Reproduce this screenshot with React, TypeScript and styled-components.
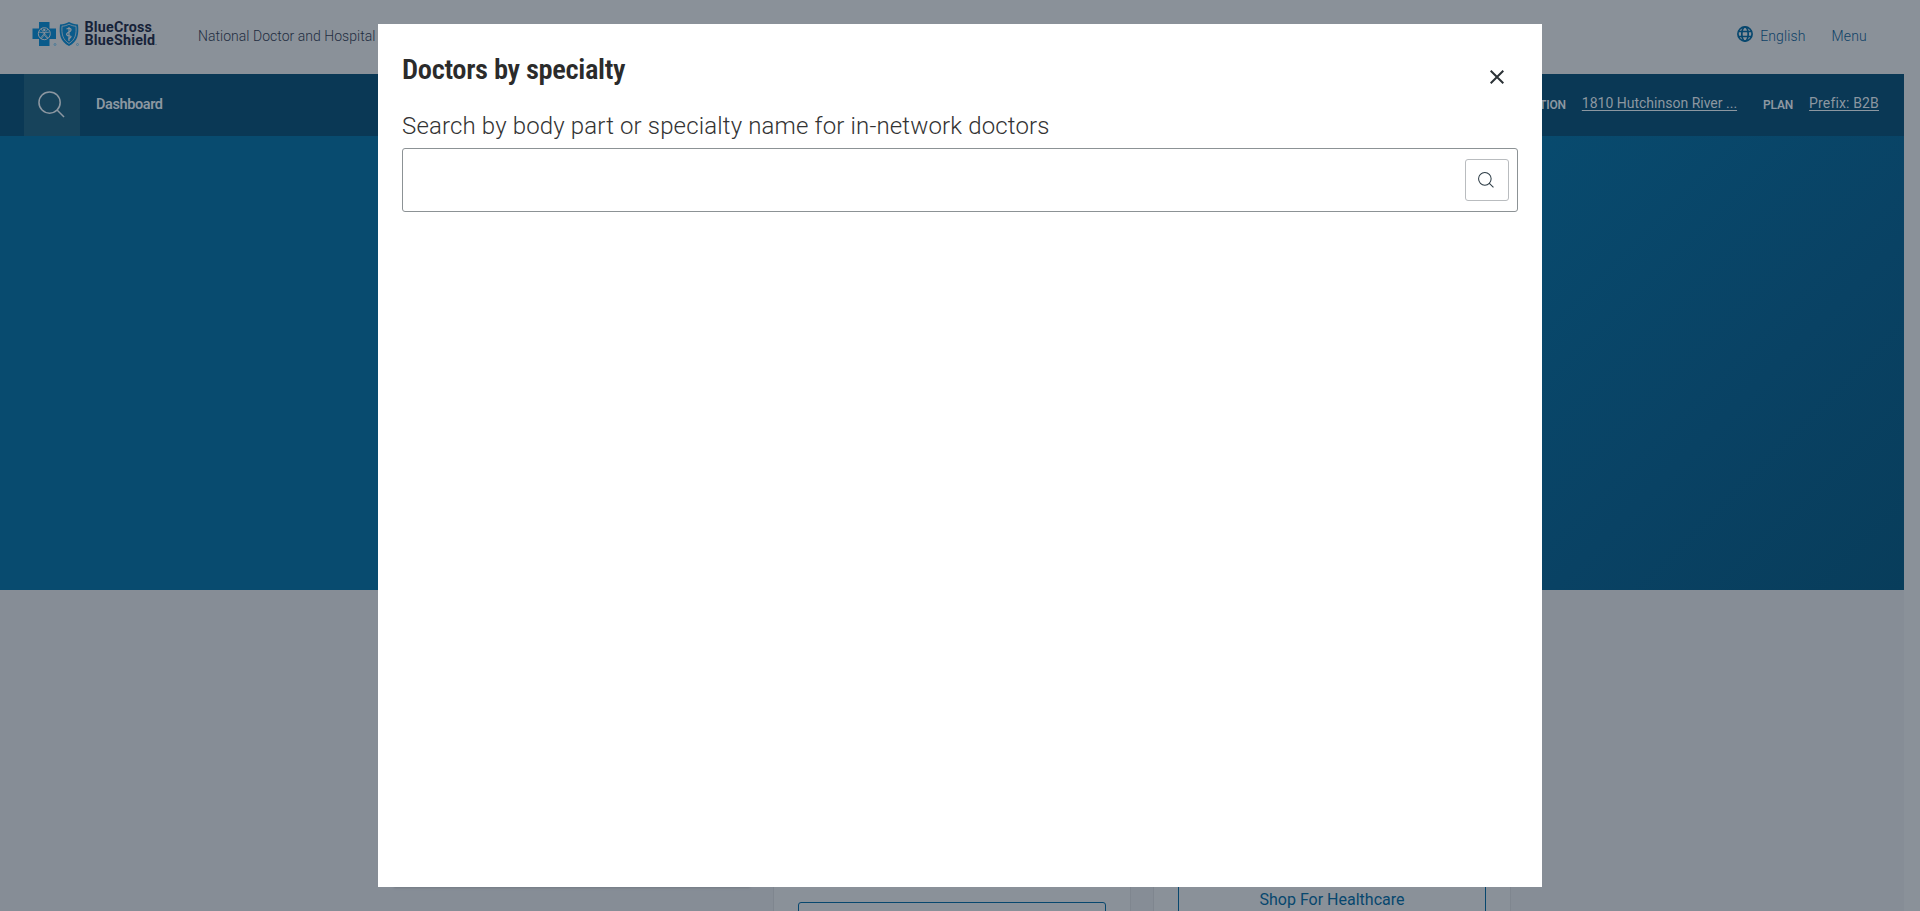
import React from 'react';
import styled, { createGlobalStyle } from 'styled-components';

const GlobalStyle = createGlobalStyle`
  * { box-sizing: border-box; }
  body { margin: 0; overflow: hidden; background: #8a9199; font-family: Roboto, "Liberation Sans", sans-serif; }
`;

const Page = styled.div`
  width: 1904px;
  height: 911px;
  overflow: hidden;
  background: #868d96;
`;

const Header = styled.header`
  display: flex;
  align-items: center;
  height: 74px;
  padding: 0 37px 0 32px;
  background: #8a9199;
`;

const Tagline = styled.span`
  margin: -3px auto 0 41px;
  font-size: 14px;
  font-weight: 300;
  letter-spacing: 0.03px;
  color: #1f2d41;
  white-space: nowrap;
`;

const HeaderLink = styled.a<{ $gap: number; $spacing: number }>`
  margin: -3px 0 0 ${(p) => p.$gap}px;
  font-size: 14px;
  font-weight: 300;
  letter-spacing: ${(p) => p.$spacing}px;
  color: #0e4167;
`;

const NavBar = styled.nav`
  display: flex;
  align-items: center;
  height: 62px;
  padding: 0 25px 0 24px;
  background: #0a3855;
`;

const SearchTab = styled.div`
  display: flex;
  align-items: center;
  width: 56px;
  height: 62px;
  padding: 0 0 2px 14px;
  background: #17435b;
`;

const NavItem = styled.a`
  margin: -1px auto 0 16px;
  font-size: 14.5px;
  font-weight: 600;
  letter-spacing: -0.4px;
  color: #8c97a1;
`;

const NavLabel = styled.span`
  margin: -1px 16px 0 0;
  font-size: 12px;
  font-weight: 600;
  letter-spacing: -0.2px;
  color: #8c97a1;
`;

const NavValue = styled.a<{ $after: number; $spacing: number }>`
  margin: -4px ${(p) => p.$after}px 0 0;
  font-size: 14px;
  letter-spacing: ${(p) => p.$spacing}px;
  color: #8c97a1;
  text-decoration: underline;
  text-decoration-thickness: 1px;
  text-underline-offset: 2px;
`;

const Hero = styled.section`
  height: 454px;
  background: linear-gradient(135deg, #084b6f 0%, #084b6f 64%, #094264 85%, #083d5b 100%);
`;

const Cards = styled.section`
  display: flex;
  height: 321px;
  padding: 0 0 0 394px;
`;

const Card = styled.article<{ $width: number; $gap: number }>`
  display: flex;
  flex-direction: column;
  width: ${(p) => p.$width}px;
  height: 340px;
  margin-right: ${(p) => p.$gap}px;
  padding: 0 24px;
  background: #8a9199;
  border: 1px solid #7f868f;
`;

const FeatureCard = styled.article`
  width: 356px;
  height: 297px;
  margin-right: 23px;
  background: #8a9199;
  box-shadow: 0 1px 2px #747b84;
`;

const CardButton = styled.button<{ $top: number }>`
  flex: none;
  height: 48px;
  margin-top: ${(p) => p.$top}px;
  padding-bottom: 3px;
  border: 1px solid #07476e;
  border-radius: 3px;
  background: transparent;
  color: #07476e;
  font: 400 16px Roboto, sans-serif;
`;

const Dialog = styled.div`
  position: fixed;
  top: 24px;
  left: 378px;
  width: 1164px;
  height: 863px;
  padding: 24px;
  background: #fff;
`;

const DialogHead = styled.div`
  display: flex;
  justify-content: space-between;
  height: 61px;
`;

const Title = styled.h1`
  margin: 0;
  font: 600 28.5px/44px "Roboto Condensed", "Liberation Sans Narrow", Roboto, sans-serif;
  letter-spacing: -0.35px;
  color: #2b2b2b;
  white-space: nowrap;
`;

const CloseButton = styled.button`
  display: flex;
  align-items: center;
  justify-content: center;
  width: 42px;
  height: 58px;
  padding: 0;
  border: 0;
  background: none;
`;

const FieldLabel = styled.label`
  display: block;
  height: 39px;
  font-size: 24px;
  font-weight: 300;
  line-height: 34px;
  letter-spacing: 0.15px;
  color: #333;
  white-space: nowrap;
`;

const Field = styled.div`
  display: flex;
  align-items: center;
  height: 64px;
  padding-right: 8px;
  border: 1px solid #8c9295;
  border-radius: 3px;
`;

const Input = styled.input`
  flex: 1;
  height: 60px;
  border: 0;
  outline: 0;
  background: transparent;
`;

const SearchButton = styled.button`
  display: flex;
  width: 44px;
  height: 42px;
  padding: 12px 0 0 12px;
  border: 1px solid #b9bcbf;
  border-radius: 3px;
  background: #fff;
`;

const Brand = styled.div`
  display: flex;
  align-items: center;
  width: 125px;
  height: 26px;
  margin-top: -7px;
`;

const BrandName = styled.div`
  margin-left: 4.5px;
  font: 700 14.3px/13px Roboto, sans-serif;
  color: #162238;
  letter-spacing: 0.2px;
  white-space: nowrap;
  sup { font-size: 5px; line-height: 0; vertical-align: baseline; }
`;

const GlobeIcon = styled.svg`
  margin-top: -6px;
`;

const BrandMarks = () => (
  <svg width="48" height="26" viewBox="0 0 48 26" fill="none">
    <path d="M7 1h10.500v6.500H24V18h-6.500v7H7v-7H.5V7.500H7z" fill="#0a5b8b" />
    <circle cx="12.300" cy="12.700" r="6" stroke="#8a9199" strokeWidth="1" />
    <circle cx="12.300" cy="9" r="1.200" fill="#8a9199" />
    <path d="M7 11l5.300 1L17.500 11M12.300 11v3L9 18M12.300 14l3.400 4M9 8l7 9M16 8L8.500 17" stroke="#8a9199" strokeWidth=".8" />
    <path d="M28 3.500c3.500 0 6-1 9-2.500 3 1.500 5.500 2.500 9 2.500C47 13 46 20.500 37 25 28 20.500 27 13 28 3.500z" fill="#0a5b8b" />
    <path d="M30 5.200c2.800-.1 4.800-.9 7-2 2.200 1.100 4.200 1.900 7 2 .5 7.800-.5 13.300-7 17.300-6.500-4-7.500-9.500-7-17.300z" stroke="#8a9199" strokeWidth=".8" />
    <path d="M37 6v14M34.500 8c4-2 6.500 1 2.500 3s-2.500 4 .8 4-.8 3-1.800 3" stroke="#8a9199" strokeWidth="1.200" />
    <circle cx="23" cy="23.500" r="1" stroke="#3f7697" strokeWidth=".8" />
    <circle cx="45.500" cy="23.500" r="1" stroke="#3f7697" strokeWidth=".8" />
  </svg>
);

const Globe = () => (
  <GlobeIcon width="16" height="16" viewBox="0 0 16 16" fill="none" stroke="#07476e" strokeWidth="1.700">
    <circle cx="8" cy="8" r="7.100" />
    <ellipse cx="8" cy="8" rx="3.200" ry="7.100" />
    <path d="M1 5.500h14M1 10.500h14" />
  </GlobeIcon>
);

const Magnifier = ({ size, color, weight }: { size: number; color: string; weight: number }) => (
  <svg width={size} height={size} viewBox="0 0 28 28" fill="none" stroke={color} strokeWidth={weight}>
    <circle cx="12" cy="12" r="11" />
    <path d="M19.500 19.500L27 27" />
  </svg>
);

export default function App() {
  return (
    <>
      <GlobalStyle />
      <Page>
        <Header>
          <Brand>
            <BrandMarks />
            <BrandName>BlueCross<sup>.</sup><br />BlueShield<sup>.</sup></BrandName>
          </Brand>
          <Tagline>National Doctor and Hospital</Tagline>
          <Globe />
          <HeaderLink $gap={7} $spacing={0.1}>English</HeaderLink>
          <HeaderLink $gap={26} $spacing={0.2}>Menu</HeaderLink>
        </Header>
        <NavBar>
          <SearchTab><Magnifier size={27} color="#8c97a1" weight={1.6} /></SearchTab>
          <NavItem>Dashboard</NavItem>
          <NavLabel>LOCATION</NavLabel>
          <NavValue $after={26} $spacing={0}>1810 Hutchinson River ...</NavValue>
          <NavLabel>PLAN</NavLabel>
          <NavValue $after={0} $spacing={0.15}>Prefix: B2B</NavValue>
        </NavBar>
        <Hero />
        <Cards>
          <FeatureCard />
          <Card $width={358} $gap={22}><CardButton $top={311} /></Card>
          <Card $width={358} $gap={0}><CardButton $top={285}>Shop For Healthcare</CardButton></Card>
        </Cards>
      </Page>
      <Dialog role="dialog">
        <DialogHead>
          <Title>Doctors by specialty</Title>
          <CloseButton aria-label="Close">
            <svg width="14" height="14" viewBox="0 0 14 14" stroke="#2b3136" strokeWidth="2"><path d="M.7.700l12.600 12.600M13.300.700L.7 13.300" /></svg>
          </CloseButton>
        </DialogHead>
        <FieldLabel>Search by body part or specialty name for in-network doctors</FieldLabel>
        <Field>
          <Input />
          <SearchButton aria-label="Search"><Magnifier size={16} color="#2b3a44" weight={1.8} /></SearchButton>
        </Field>
      </Dialog>
    </>
  );
}
